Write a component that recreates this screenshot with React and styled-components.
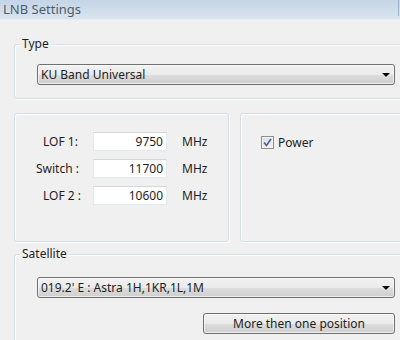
import React from "react";
import styled, { createGlobalStyle } from "styled-components";

const GlobalStyle = createGlobalStyle`
  html, body {
    margin: 0;
    padding: 0;
    background: #f0f0f0;
  }
  body {
    font-family: "Noto Sans", "DejaVu Sans", sans-serif;
    font-size: 12px;
    color: #1e1e1e;
  }
`;

const Window = styled.div`
  width: 400px;
  height: 340px;
  overflow: hidden;
  background: #f0f0f0;
  display: flex;
  flex-direction: column;
`;

const TitleBar = styled.div`
  flex: none;
  height: 19px;
  display: flex;
  align-items: flex-start;
  justify-content: space-between;
  background: linear-gradient(to bottom, #c4d5e7 0%, #cfdcea 50%, #d9e4f0 100%);
  border-bottom: 1px solid #e4ebf3;
`;

const Title = styled.span`
  padding: 2px 0 0 3px;
  font-size: 13px;
  line-height: 15px;
  color: #4f5d6b;
`;

const CaptionEdge = styled.span`
  width: 1px;
  height: 16px;
  margin-right: 1px;
  background: #9fb2c8;
`;

const Body = styled.div`
  width: 420px;
  padding: 24px 0 0 14px;
  display: flex;
  flex-direction: column;
`;

const Group = styled.div`
  position: relative;
  border: 1px solid #d5dfe5;
  border-radius: 3px;
  box-shadow: inset 1px 1px 0 #fff, 1px 1px 0 #fff;
  padding: ${(p) => p.$pad || "0"};
  width: ${(p) => p.$width || "auto"};
  height: ${(p) => p.$height || "auto"};
  margin-top: ${(p) => p.$gap || 0}px;
  box-sizing: border-box;
`;

const Legend = styled.span`
  position: absolute;
  top: -8px;
  left: 5px;
  padding: 0 2px;
  background: #f0f0f0;
  font-size: 12px;
  line-height: 14px;
  color: #1e1e1e;
`;

const GroupRow = styled.div`
  display: flex;
  gap: 11px;
  margin-top: 14px;
`;

const Combo = styled.div`
  width: 358px;
  height: 21px;
  box-sizing: border-box;
  display: flex;
  align-items: center;
  justify-content: space-between;
  padding: 0 4px 0 3px;
  border: 1px solid #707070;
  border-radius: 3px;
  background: linear-gradient(
    to bottom,
    #f2f2f2 0%,
    #ebebeb 50%,
    #dddddd 51%,
    #cfcfcf 100%
  );
  box-shadow: inset 0 0 0 1px rgba(255, 255, 255, 0.6);
  color: #1e1e1e;
  white-space: nowrap;
`;

const Arrow = styled.span`
  width: 0;
  height: 0;
  border-left: 4px solid transparent;
  border-right: 4px solid transparent;
  border-top: 4px solid #000;
  filter: drop-shadow(0 1px 0 rgba(255, 255, 255, 0.8));
`;

const FreqGrid = styled.div`
  display: grid;
  grid-template-columns: 57px 89px auto;
  row-gap: 8px;
  align-items: center;
`;

const FieldLabel = styled.span`
  padding-left: ${(p) => p.$indent || 0}px;
  color: #1e1e1e;
  white-space: nowrap;
`;

const NumberBox = styled.div`
  height: 19px;
  box-sizing: border-box;
  margin-right: 15px;
  padding: 0 3px;
  display: flex;
  align-items: center;
  justify-content: flex-end;
  background: #fff;
  border: 1px solid #e3e9ef;
  border-top-color: #d4d7da;
`;

const Unit = styled.span`
  color: #1e1e1e;
`;

const CheckRow = styled.label`
  display: flex;
  align-items: center;
  gap: 4px;
`;

const CheckBox = styled.span`
  width: 13px;
  height: 13px;
  box-sizing: border-box;
  border: 1px solid #8e8f8f;
  background: linear-gradient(135deg, #dcdcdc 0%, #f4f4f4 100%);
  box-shadow: inset 0 0 0 1px #f4f4f4;
  display: flex;
  align-items: center;
  justify-content: center;
`;

const ButtonRow = styled.div`
  display: flex;
  justify-content: flex-end;
  width: 358px;
  margin-top: 15px;
`;

const Button = styled.div`
  width: 192px;
  height: 21px;
  box-sizing: border-box;
  display: flex;
  align-items: center;
  justify-content: center;
  border: 1px solid #707070;
  border-radius: 3px;
  background: linear-gradient(
    to bottom,
    #f2f2f2 0%,
    #ebebeb 50%,
    #dddddd 51%,
    #cfcfcf 100%
  );
  box-shadow: inset 0 0 0 1px rgba(255, 255, 255, 0.6);
  color: #1e1e1e;
`;

const freqs = [
  { label: "LOF 1:", value: "9750", indent: 7 },
  { label: "Switch :", value: "11700", indent: 0 },
  { label: "LOF 2 :", value: "10600", indent: 7 }
];

export default function App() {
  return (
    <Window>
      <GlobalStyle />
      <TitleBar>
        <Title>LNB Settings</Title>
        <CaptionEdge />
      </TitleBar>
      <Body>
        <Group $pad="19px 0 13px 22px">
          <Legend>Type</Legend>
          <Combo>
            <span>KU Band Universal</span>
            <Arrow />
          </Combo>
        </Group>
        <GroupRow>
          <Group $width="215px" $height="129px" $pad="18px 0 0 21px">
            <FreqGrid>
              {freqs.map((f) => (
                <React.Fragment key={f.label}>
                  <FieldLabel $indent={f.indent}>{f.label}</FieldLabel>
                  <NumberBox>{f.value}</NumberBox>
                  <Unit>MHz</Unit>
                </React.Fragment>
              ))}
            </FreqGrid>
          </Group>
          <Group $width="180px" $height="129px" $pad="20px 0 0 20px">
            <CheckRow>
              <CheckBox>
                <svg width="9" height="9" viewBox="0 0 9 9">
                  <path
                    d="M1 4.5 L3.5 7.5 L8 1"
                    fill="none"
                    stroke="#4a5f97"
                    strokeWidth="1.6"
                  />
                </svg>
              </CheckBox>
              <span>Power</span>
            </CheckRow>
          </Group>
        </GroupRow>
        <Group $gap={12} $height="100px" $pad="22px 0 0 22px">
          <Legend>Satellite</Legend>
          <Combo>
            <span>019.2' E : Astra 1H,1KR,1L,1M</span>
            <Arrow />
          </Combo>
          <ButtonRow>
            <Button>More then one position</Button>
          </ButtonRow>
        </Group>
      </Body>
    </Window>
  );
}
